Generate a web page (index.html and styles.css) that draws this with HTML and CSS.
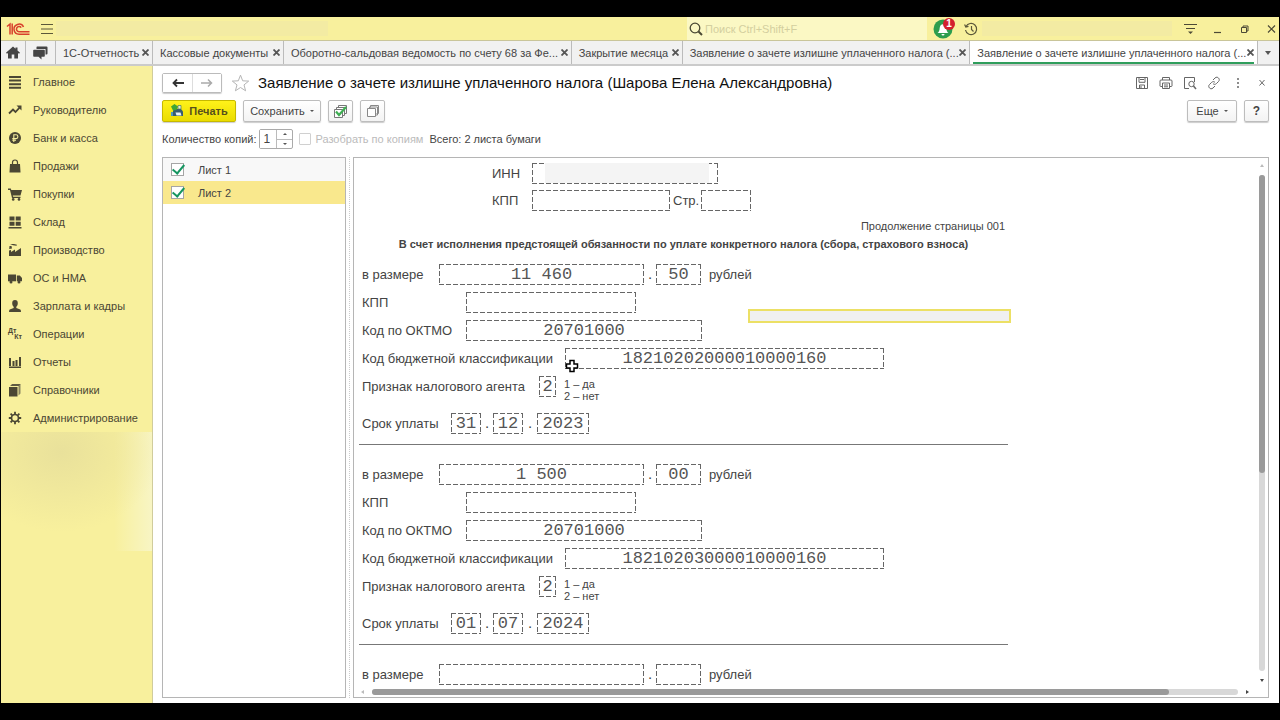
FILE: index.html
```html
<!DOCTYPE html>
<html lang="ru">
<head>
<meta charset="utf-8">
<title>Заявление о зачете излишне уплаченного налога</title>
<link rel="stylesheet" href="styles.css">
</head>
<body>
<div class="window">
  <header class="titlebar">
    <svg class="logo" viewBox="0 0 24 14" fill="none" stroke="#d8402c" stroke-width="1.5"><path d="M1 4.5 4 2v10.5M6.2 1.5v11"/><path d="M17.5 5A5 5 0 1 0 13 12.2h10.500"/><path d="M15.200 5.600A2.600 2.600 0 1 0 13 9.700h10.500"/></svg>
    <button class="plain menu" aria-label="Меню"><svg width="14" height="12" viewBox="0 0 14 12" stroke="#5c583a" stroke-width="1.200"><path d="M1 1.500h12M1 6h12M1 10.500h12"/></svg></button>
    <span class="smudge"></span>
    <label class="search">
      <svg width="14" height="14" viewBox="0 0 14 14" fill="none" stroke="#4a4834" stroke-width="1.300"><circle cx="6" cy="6" r="4.800"/><path d="m9.500 9.500 3.500 3.500" stroke-width="2"/></svg>
      <input type="search" placeholder="Поиск Ctrl+Shift+F" aria-label="Поиск">
    </label>
    <button class="plain bell" aria-label="Уведомления"><svg width="20" height="20" viewBox="0 0 20 20"><circle cx="10" cy="10" r="9.500" fill="#2d9d4e"/><path d="M4.500 14c1.500-1 2-2.500 2.200-5C7 6.500 8 5.200 10 5.200s3 1.300 3.300 3.800c.2 2.500.7 4 2.200 5z" fill="#fff"/><path d="M8.500 15h3a1.500 1.500 0 0 1-3 0" fill="#fff"/></svg><span class="badge">1</span></button>
    <button class="plain" aria-label="История"><svg width="14" height="14" viewBox="0 0 14 14" fill="none" stroke="#5c583a" stroke-width="1.200"><path d="M2 4.500A5.600 5.600 0 1 1 1.500 8M.6 2.500 1.800 5l2.700-.7M7.500 4v3.500l2 2"/></svg></button>
    <span class="smudge right"></span>
    <span class="wincontrols">
      <button class="plain" aria-label="Настройки"><svg width="13" height="12" viewBox="0 0 13 12" stroke="#4c4936" stroke-width="1.200"><path d="M0 1.500h13M2 5.500h9"/><path d="M4 8.500h5L6.500 11z" fill="#4c4936" stroke="none"/></svg></button>
      <button class="plain" aria-label="Свернуть"><svg width="13" height="12" viewBox="0 0 13 12" stroke="#4c4936" stroke-width="1.200"><path d="M3 9.500h7"/></svg></button>
      <button class="plain" aria-label="Развернуть"><svg width="13" height="12" viewBox="0 0 13 12" fill="none" stroke="#4c4936"><path d="M3.500 4.500h5v5h-5zM5 4.500V3h5v5H8.500"/></svg></button>
      <button class="plain" aria-label="Закрыть"><svg width="13" height="12" viewBox="0 0 13 12" stroke="#4c4936" stroke-width="1.200"><path d="m3 2.500 7 7m0-7-7 7"/></svg></button>
    </span>
  </header>

  <nav class="tabs">
    <button class="tab icon" aria-label="Начальная страница"><svg width="14" height="13" viewBox="0 0 14 13" fill="#454545"><path d="M7 .5 0 6.800l1 1L2 7v5.500h3.700V8.500h2.600v4H12V7l1 .8 1-1-2.500-2.300V1.500h-2v1.300z"/></svg></button>
    <button class="tab icon" aria-label="Обсуждения"><svg width="15" height="14" viewBox="0 0 15 14" fill="#454545"><path d="M4 .5h9.500a1 1 0 0 1 1 1v6a1 1 0 0 1-1 1H12.500V3H3.500V1z"/><path d="M1 3.800h10a.8.8 0 0 1 .8.800v5.400a.8.8 0 0 1-.8.800H8.500v2.700L5.500 10.800H1a.8.8 0 0 1-.8-.8V4.600A.8.8 0 0 1 1 3.800"/></svg></button>
    <div class="tab"><span>1С-Отчетность</span><button class="plain x" aria-label="Закрыть"><svg width="7" height="7" viewBox="0 0 7 7"><path d="m.5.5 6 6m0-6-6 6"/></svg></button></div>
    <div class="tab"><span>Кассовые документы</span><button class="plain x" aria-label="Закрыть"><svg width="7" height="7" viewBox="0 0 7 7"><path d="m.5.5 6 6m0-6-6 6"/></svg></button></div>
    <div class="tab"><span>Оборотно-сальдовая ведомость по счету 68 за Фе...</span><button class="plain x" aria-label="Закрыть"><svg width="7" height="7" viewBox="0 0 7 7"><path d="m.5.5 6 6m0-6-6 6"/></svg></button></div>
    <div class="tab"><span>Закрытие месяца</span><button class="plain x" aria-label="Закрыть"><svg width="7" height="7" viewBox="0 0 7 7"><path d="m.5.5 6 6m0-6-6 6"/></svg></button></div>
    <div class="tab"><span>Заявление о зачете излишне уплаченного налога (...</span><button class="plain x" aria-label="Закрыть"><svg width="7" height="7" viewBox="0 0 7 7"><path d="m.5.5 6 6m0-6-6 6"/></svg></button></div>
    <div class="tab active"><span>Заявление о зачете излишне уплаченного налога (...</span><button class="plain x" aria-label="Закрыть"><svg width="7" height="7" viewBox="0 0 7 7"><path d="m.5.5 6 6m0-6-6 6"/></svg></button></div>
    <button class="tab icon" aria-label="Все вкладки"><i class="caret big"></i></button>
  </nav>

  <div class="body">
    <aside class="sidebar">
      <a href="#"><svg viewBox="0 0 14 14"><path d="M1 1h12v2H1zM1 4.600h12v2H1zM1 8.200h12v2H1zM1 11.800h12v2H1z"/></svg>Главное</a>
      <a href="#"><svg viewBox="0 0 14 14"><path d="m1 10.500 4-4 2.500 2.500L12 4.200" fill="none" stroke="#4b4734" stroke-width="1.800"/><path d="M8.500 2.500H13.500V7.500z"/></svg>Руководителю</a>
      <a href="#"><svg viewBox="0 0 14 14"><circle cx="7" cy="7" r="6"/><path d="M5.800 11V3.800h2.200a1.900 1.900 0 0 1 0 3.800H4.300M4.300 9.300h3.700" fill="none" stroke="#f7f09f" stroke-width="1.100"/></svg>Банк и касса</a>
      <a href="#"><svg viewBox="0 0 14 14"><path d="M2 5h10l.5 8.500h-11z"/><path d="M4.500 7V3.500a2.500 2.500 0 0 1 5 0V7" fill="none" stroke="#4b4734" stroke-width="1.200"/></svg>Продажи</a>
      <a href="#"><svg viewBox="0 0 14 14"><path d="M0 1.500h2.800l.5 1.500H14l-1.500 5.500H4.800l.4 1.200h7.300v1.300H4L2 3H0z"/><circle cx="5.200" cy="12.400" r="1.300"/><circle cx="11" cy="12.400" r="1.300"/></svg>Покупки</a>
      <a href="#"><svg viewBox="0 0 14 14"><path d="M1.500 1.500h5v4h-5zM7.700 1.500h5v4h-5zM1.500 6.700h5v4h-5zM7.700 6.700h5v4h-5zM0.500 12h13v1.500H.5z"/></svg>Склад</a>
      <a href="#"><svg viewBox="0 0 14 14"><path d="M1 13V7.500l2-.5v2l4-2.500V9l6-4v8zM1.200 6l.3-3h2L4 5.500zM2 1h4l3 .7-.5 1L5 2.300z"/></svg>Производство</a>
      <a href="#"><svg viewBox="0 0 14 14"><path d="M0 3.500h8v6.800H0z"/><path d="M8.800 4.500h3L14 7v3.300H8.800z"/><circle cx="3" cy="11" r="1.500"/><circle cx="11" cy="11" r="1.500"/></svg>ОС и НМА</a>
      <a href="#"><svg viewBox="0 0 14 14"><path d="M4.200 4.200a2.800 3.300 0 1 1 5.600 0c0 1.800-.8 3-1.500 3.600V9l4 1.500q.7.4.7 2.500H1q0-2 .7-2.500l4-1.500V7.800c-.7-.6-1.500-1.800-1.500-3.600"/></svg>Зарплата и кадры</a>
      <a href="#"><span class="dk"><b>Дт</b><b>Кт</b></span>Операции</a>
      <a href="#"><svg viewBox="0 0 14 14"><path d="M1 3h2v8H1zM4.500 6h2v5h-2zM7.500 5h2v6h-2zM11 2h2v9h-2zM1 11.500h12V13H1z"/></svg>Отчеты</a>
      <a href="#"><svg viewBox="0 0 14 14"><path d="M1 4h8.500v9.500H1z"/><path d="M2 3 4 1h8.500v9.500l-2 2V3z" fill="#8b8762"/><path d="m2.500 3 2-2H12.500l-2 2z" fill="#5f5b42"/></svg>Справочники</a>
      <a href="#"><svg viewBox="0 0 14 14"><circle cx="7" cy="7" r="3.500" fill="none" stroke="#4b4734" stroke-width="1.700"/><path d="M7 .8v2.400M7 10.800v2.400M.8 7h2.400M10.800 7h2.400M2.600 2.600l1.700 1.700M9.700 9.700l1.700 1.700M11.400 2.600 9.700 4.300M4.300 9.700l-1.700 1.700" stroke="#4b4734" stroke-width="1.800"/></svg>Администрирование</a>
      <div class="haze"></div>
    </aside>

    <main class="main">
      <div class="heading">
        <span class="history"><button aria-label="Назад"><svg width="12" height="10" viewBox="0 0 12 10" fill="none" stroke="#333" stroke-width="1.800"><path d="M12 5H2M5 1.500 1.500 5 5 8.500"/></svg></button><button aria-label="Вперед"><svg width="12" height="10" viewBox="0 0 12 10" fill="none" stroke="#aaa" stroke-width="1.500"><path d="M0 5h10M7 1.500 10.500 5 7 8.500"/></svg></button></span>
        <button class="plain" aria-label="В избранное"><svg width="19" height="18" viewBox="0 0 19 18" fill="none" stroke="#b5b5b5"><path d="m9.500 1.200 2.200 5.600 6 .3-4.700 3.800 1.600 5.900-5.100-3.300-5.100 3.300L6 10.900 1.300 7.100l6-.3z"/></svg></button>
        <h1>Заявление о зачете излишне уплаченного налога (Шарова Елена Александровна)</h1>
        <span class="tools">
          <button class="plain" aria-label="Сохранить"><svg viewBox="0 0 14 14"><path d="M1.500 1.500h11v11h-11zM4 1.500v4.800h6V1.500M4.500 12.500V9h5v3.500M5 3.500h4M6 10v2.500"/></svg></button>
          <button class="plain" aria-label="Печать"><svg viewBox="0 0 14 14"><path d="M3.500 4V1.500h7V4M3.500 10.500h-2A.7.7 0 0 1 1 10V5q0-1 1-1h10q1 0 1 1v5a.7.7 0 0 1-.5.500h-2M3.500 7h7v5.500h-7zM5 9h4M5 10.800h4"/></svg></button>
          <button class="plain" aria-label="Просмотр"><svg viewBox="0 0 14 14"><path d="M6 12.500H1.500v-11h10V6"/><circle cx="8.500" cy="8" r="2.700"/><path d="m10.500 10 2.500 3" stroke-width="1.500"/></svg></button>
          <button class="plain" aria-label="Ссылка"><svg viewBox="0 0 14 14"><path d="m6 4 2-2c1.300-1.300 2.800-.8 3.500 0s1.300 2.200 0 3.500L9.400 7.600c-1 1-2.500 1-3.400 0M8 10l-2 2c-1.300 1.300-2.800.8-3.500 0s-1.300-2.200 0-3.500l2.100-2.100c1-1 2.500-1 3.400 0"/></svg></button>
          <button class="plain" aria-label="Меню формы"><svg viewBox="0 0 14 14"><path d="M6.500 2.500h1v1h-1zM6.500 6.500h1v1h-1zM6.500 10.500h1v1h-1z"/></svg></button>
          <button class="plain" aria-label="Закрыть форму"><svg viewBox="0 0 14 14"><path d="m4.500 4 5 5.500m0-5.500-5 5.500"/></svg></button>
        </span>
      </div>

      <div class="commands">
        <button class="btn print"><svg width="14" height="14" viewBox="0 0 14 14"><path d="M4 5h7l2 2.500V12H3V7z" fill="#385c70"/><path d="M5.500 8.500h5l1 3h-5z" fill="#e8f1f5"/><path d="M1 2.500 4.500 0 8 2.500 6.500 6 3 6.500z" fill="#3fa535"/><path d="M8 1.500h3V5H8z" fill="#e9f0d0" stroke="#4a7a66" stroke-width=".7"/><path d="M1 8h2v4H1z" fill="#4c98bd"/></svg>Печать</button>
        <button class="btn save">Сохранить<i class="caret"></i></button>
        <button class="btn square" aria-label="Выбрать все"><svg width="14" height="14" viewBox="0 0 14 14" fill="#fff" stroke="#777"><path d="M4.500 3.500v-2h8v8h-2M2.500 5V3.500h8v8H9M.5 5.500h8v8h-8z"/><path d="m2 7.500 3 3.500L12 3" fill="none" stroke="#3fae53" stroke-width="2.200"/></svg></button>
        <button class="btn square" aria-label="Снять выбор"><svg width="14" height="14" viewBox="0 0 14 14" fill="#fff" stroke="#888"><path d="M4.500 3.500v-2h8v8h-2M3.500 5V3h8v8H9.500M1.500 4.500h8v8h-8z"/></svg></button>
        <button class="btn more">Еще<i class="caret"></i></button>
        <button class="btn help">?</button>
      </div>

      <div class="options">
        <label for="copies">Количество копий:</label>
        <span class="spinner"><input id="copies" type="text" value="1"><span class="steps"><button aria-label="Больше"><i class="caret up"></i></button><button aria-label="Меньше"><i class="caret"></i></button></span></span>
        <label class="collate"><input type="checkbox" disabled>Разобрать по копиям</label>
        <span class="total">Всего: 2 листа бумаги</span>
      </div>

      <div class="panes">
        <div class="sheets">
          <label class="sheet"><input type="checkbox" checked><span>Лист 1</span></label>
          <label class="sheet selected"><input type="checkbox" checked><span>Лист 2</span></label>
        </div>
        <div class="splitter"></div>
        <div class="doc">
          <div class="page">
            <div class="row top"><span class="lbl short">ИНН</span><span class="cell inn"><span class="mask"></span></span></div>
            <div class="row top"><span class="lbl short">КПП</span><span class="cell kpp-top"></span><span class="lbl str">Стр.</span><span class="cell str-no"></span></div>
            <p class="cont">Продолжение страницы 001</p>
            <h2>В счет исполнения предстоящей обязанности по уплате конкретного налога (сбора, страхового взноса)</h2>

            <section class="group">
              <div class="row"><span class="lbl sum">в размере</span><span class="cell rub">11 460</span><span class="dot">.</span><span class="cell kop">50</span><span class="lbl unit">рублей</span></div>
              <div class="row"><span class="lbl code">КПП</span><span class="cell kpp"></span></div>
              <div class="row"><span class="lbl code">Код по ОКТМО</span><span class="cell oktmo">20701000</span></div>
              <div class="row"><span class="lbl kbk-l">Код бюджетной классификации</span><span class="cell kbk">18210202000010000160</span></div>
              <div class="row agent"><span class="lbl agent-l">Признак налогового агента</span><span class="cell one">2</span><span class="note">1 – да<br>2 – нет</span></div>
              <div class="row"><span class="lbl due">Срок уплаты</span><span class="cell day">31</span><span class="dot">.</span><span class="cell day">12</span><span class="dot wide">.</span><span class="cell year">2023</span></div>
            </section>
            <section class="group">
              <div class="row"><span class="lbl sum">в размере</span><span class="cell rub">1 500</span><span class="dot">.</span><span class="cell kop">00</span><span class="lbl unit">рублей</span></div>
              <div class="row"><span class="lbl code">КПП</span><span class="cell kpp"></span></div>
              <div class="row"><span class="lbl code">Код по ОКТМО</span><span class="cell oktmo">20701000</span></div>
              <div class="row"><span class="lbl kbk-l">Код бюджетной классификации</span><span class="cell kbk">18210203000010000160</span></div>
              <div class="row agent"><span class="lbl agent-l">Признак налогового агента</span><span class="cell one">2</span><span class="note">1 – да<br>2 – нет</span></div>
              <div class="row"><span class="lbl due">Срок уплаты</span><span class="cell day">01</span><span class="dot">.</span><span class="cell day">07</span><span class="dot wide">.</span><span class="cell year">2024</span></div>
            </section>
            <section class="group">
              <div class="row"><span class="lbl sum">в размере</span><span class="cell rub"></span><span class="dot">.</span><span class="cell kop"></span><span class="lbl unit">рублей</span></div>
            </section>
            <div class="picked"></div>
            <svg class="cursor" width="14" height="14" viewBox="0 0 14 14"><path d="M5 1.500h4V5h3.500v4H9v3.500H5V9H1.500V5H5z" fill="#fff" stroke="#000" stroke-width="1.500"/></svg>
          </div>
          <div class="vbar"><i class="arrow n"></i><span class="track"><span class="thumb"></span></span><i class="arrow s"></i></div>
          <div class="hbar"><i class="arrow w"></i><span class="track"><span class="thumb"></span></span><i class="arrow e"></i></div>
        </div>
      </div>
    </main>
  </div>
</div>
</body>
</html>
```
FILE: styles.css
```css
* { box-sizing: border-box; }
html, body { height: 100%; }
body {
  margin: 0;
  padding: 17px 1px;
  background: #000;
  color: #444;
  font: 11px/14px "Liberation Sans", Arial, sans-serif;
  overflow: hidden;
}
button, input { font: inherit; color: inherit; margin: 0; }
svg { display: block; flex: none; }
.plain { display: flex; align-items: center; justify-content: center; padding: 0; border: 0; background: none; }
.window { display: flex; flex-direction: column; height: 100%; background: #fff; }

/* Title bar */
.titlebar { display: flex; align-items: center; flex: none; height: 23px; padding: 0 1px 0 5px; background: #f8f09d; }
.logo { width: 24px; height: 14px; }
.menu { margin: 0 2px 0 10px; }
.smudge { width: 272px; height: 15px; background: #f3eba3; }
.search { display: flex; align-items: center; gap: 2px; width: 240px; height: 100%; margin-left: auto; padding-left: 2px; background: #fbf8c4; }
.search input { flex: 1; min-width: 0; padding: 0; border: 0; background: none; outline: 0; }
.search input::placeholder { color: #d3cf9f; opacity: 1; }
.bell { position: relative; margin: 0 11px 0 6px; }
.badge { position: absolute; top: -1px; right: -2px; width: 12px; height: 12px; border-radius: 6px; background: #d3202e; color: #fff; font-size: 10px; line-height: 12px; font-weight: bold; }
.smudge.right { width: 190px; margin: 0 12px 0 4px; }
.wincontrols { display: flex; gap: 14px; }

/* Open windows */
.tabs { display: grid; grid-template-columns: 25px 30px 97px 131px 1fr 111px 1fr 1fr 21px; flex: none; height: 26px; border-top: 1px solid #c9c59a; border-bottom: 2px solid #cbcbcb; background: #f1f1f1; }
.tab { display: flex; align-items: center; justify-content: space-between; min-width: 0; padding: 0 3px 0 7px; border: 0; border-right: 1px solid #bbb; background: none; white-space: nowrap; }
.tab span { flex: none; }
.tab.icon { justify-content: center; padding: 0; }
.tab:last-child { border-right: 0; }
.tab.active { background: linear-gradient(#2f9e5c, #2f9e5c) center bottom / calc(100% - 6px) 2px no-repeat #fff; }
.x { flex: none; height: 12px; }
.x svg { stroke: #555; stroke-width: 1.8; }
.caret { display: inline-block; border: 2px solid transparent; border-top-color: #555; border-bottom: 0; }
.caret.up { border-top: 0; border-bottom: 2px solid #555; }
.caret.big { border-width: 4px 3px 0; }

.body { display: flex; flex: 1; min-height: 0; }

/* Sections */
.sidebar { display: flex; flex-direction: column; flex: none; width: 152px; padding-top: 2px; border-right: 1px solid #d0cc9c; background: #f8f09d; }
.sidebar a { display: flex; align-items: center; gap: 11px; flex: none; height: 28px; padding-left: 7px; color: #4b4734; text-decoration: none; }
.sidebar svg { width: 14px; height: 14px; fill: #4b4734; }
.dk { display: flex; flex-direction: column; width: 14px; font-size: 7px; line-height: 6px; }
.dk b:last-child { align-self: flex-end; }
.haze { height: 119px; background: radial-gradient(ellipse 100px 80px at 60px 20px, #e9e19b, transparent), linear-gradient(90deg, transparent 75%, #f8f5c4); }

/* Form */
.main { display: flex; flex-direction: column; flex: 1; min-width: 0; padding: 6px 10px 5px 9px; }
.heading { display: flex; align-items: center; height: 22px; }
.history { display: flex; height: 20px; margin-right: 9px; border: 1px solid #bbb; border-radius: 2px; box-shadow: 0 1px 1px #ccc; }
.history button { display: flex; align-items: center; justify-content: center; width: 29px; padding: 0; border: 0; background: #fff; }
.history button + button { border-left: 1px solid #ddd; }
h1 { margin: 0 0 0 8px; color: #111; font-size: 15px; line-height: 20px; font-weight: normal; white-space: nowrap; }
.tools { display: flex; gap: 10px; margin-left: auto; }
.tools svg { width: 14px; height: 14px; fill: none; stroke: #666; }
.commands { display: flex; align-items: center; gap: 7px; height: 34px; }
.btn { display: flex; align-items: center; justify-content: center; gap: 5px; height: 22px; padding: 0; border: 1px solid #bdbdbd; border-radius: 2px; background: linear-gradient(#fff, #f3f3f3); box-shadow: 0 1px 1px #ccc; }
.print { width: 74px; border-color: #c6b900; background: linear-gradient(#fff21a, #eadc00); color: #55501c; font-weight: bold; }
.save { width: 78px; }
.square { width: 25px; }
.more { width: 50px; margin-left: auto; }
.help { width: 25px; font-size: 12px; font-weight: bold; }
.options { display: flex; align-items: center; height: 22px; white-space: nowrap; }
.spinner { display: flex; width: 34px; height: 20px; margin: 0 6px 0 3px; border: 1px solid #aaa; border-radius: 2px; }
.spinner input { width: 16px; padding: 0 0 0 3px; border: 0; outline: 0; font-size: 12px; }
.steps { display: grid; flex: 1; border-left: 1px solid #bbb; }
.steps button { display: flex; align-items: center; justify-content: center; padding: 0; border: 0; background: none; }
.steps button + button { border-top: 1px solid #bbb; }
.collate { display: flex; align-items: center; gap: 4px; color: #bbb; }
.collate input { width: 12px; height: 12px; appearance: none; border: 1px solid #d0d0d0; border-radius: 1px; }
.total { margin-left: 6px; }
.panes { display: flex; flex: 1; min-height: 0; margin-top: 7px; }

.sheets { flex: none; width: 184px; border: 1px solid #b5b5b5; }
.sheet { display: flex; align-items: center; gap: 14px; height: 23px; padding-left: 8px; background: #f8f8f8; }
.sheet.selected { background: #f9e88d; }
.sheet input { position: relative; width: 13px; height: 13px; appearance: none; border: 1px solid #a5a5a5; background: #fff; }
.sheet input:checked::after { content: ""; position: absolute; left: 3px; top: -2px; width: 5px; height: 10px; border: solid #159560; border-width: 0 2px 2px 0; transform: rotate(40deg); }
.splitter { flex: none; width: 4px; margin-right: 3px; border-right: 1px dotted #ccc; }

/* Printed sheet */
.doc { display: grid; grid-template: 1fr 10px / 1fr 12px; flex: 1; min-width: 0; border: 1px solid #b5b5b5; }
.page { position: relative; min-width: 0; min-height: 0; padding: 5px 0 0 5px; overflow: hidden; white-space: nowrap; }
.row { display: flex; align-items: flex-start; height: 21px; margin-bottom: 7px; }
.row.top { margin-bottom: 6px; padding-left: 133px; }
.row.agent { height: 30px; }
.lbl { flex: none; padding-left: 3px; font-size: 13px; line-height: 21px; }
.cell {
  --h: repeating-linear-gradient(90deg, #666 0 5px, transparent 5px 7px);
  --v: repeating-linear-gradient(#666 0 5px, transparent 5px 7px);
  flex: none;
  height: 21px;
  background: var(--h) top / 100% 1px no-repeat, var(--h) bottom / 100% 1px no-repeat, var(--v) left / 1px 100% no-repeat, var(--v) right / 1px 100% no-repeat;
  color: #555;
  font: 17px/21px "Liberation Mono", "Courier New", monospace;
  text-align: center;
}
.dot { flex: none; width: 12px; text-align: center; font-size: 15px; line-height: 20px; }
.dot.wide { width: 14px; }
.short { width: 40px; padding: 0; }
.inn { width: 186px; }
.mask { display: block; width: 164px; height: 20px; margin-left: 13px; background: #f4f4f4; }
.kpp-top { width: 138px; }
.str { width: 31px; }
.str-no { width: 50px; }
.cont { width: 646px; margin: 0; line-height: 18px; text-align: right; }
h2 { width: 649px; margin: 2px 0 13px; font-size: 11px; line-height: 14px; text-align: center; }
.group { width: 649px; margin-bottom: 19px; border-bottom: 1px solid #777; padding-bottom: 3px; }
.sum { width: 80px; }
.rub { width: 205px; }
.kop { width: 45px; }
.unit { padding-left: 8px; }
.code { width: 107px; }
.kpp { width: 170px; }
.oktmo { width: 236px; }
.kbk-l { width: 206px; }
.kbk { width: 319px; }
.agent-l { width: 180px; }
.one { width: 17px; }
.note { padding: 2px 0 0 8px; line-height: 12px; }
.due { width: 92px; }
.day { width: 30px; }
.year { width: 52px; }
.picked { position: absolute; left: 394px; top: 151px; width: 263px; height: 14px; border: 2px solid #ece065; background: #f0f0f0; }
.cursor { position: absolute; left: 211px; top: 201px; }

.vbar { display: flex; flex-direction: column; align-items: center; padding: 6px 0 5px; gap: 8px; }
.hbar { display: flex; align-items: center; padding: 0 7px; gap: 8px; }
.track { display: flex; flex: 1; border-radius: 3px; background: #d8d8d8; }
.vbar .track { flex-direction: column; width: 6px; }
.hbar .track { height: 6px; }
.thumb { border-radius: 3px; background: #9a9a9a; }
.vbar .thumb { height: 60%; }
.hbar .thumb { width: 92%; }
.arrow { flex: none; border: 2px solid transparent; }
.arrow.n { border-top: 0; border-bottom: 3px solid #bbb; }
.arrow.s { border-bottom: 0; border-top: 3px solid #444; }
.arrow.w { border-left: 0; border-right: 3px solid #bbb; }
.arrow.e { border-right: 0; border-left: 3px solid #444; }
```
